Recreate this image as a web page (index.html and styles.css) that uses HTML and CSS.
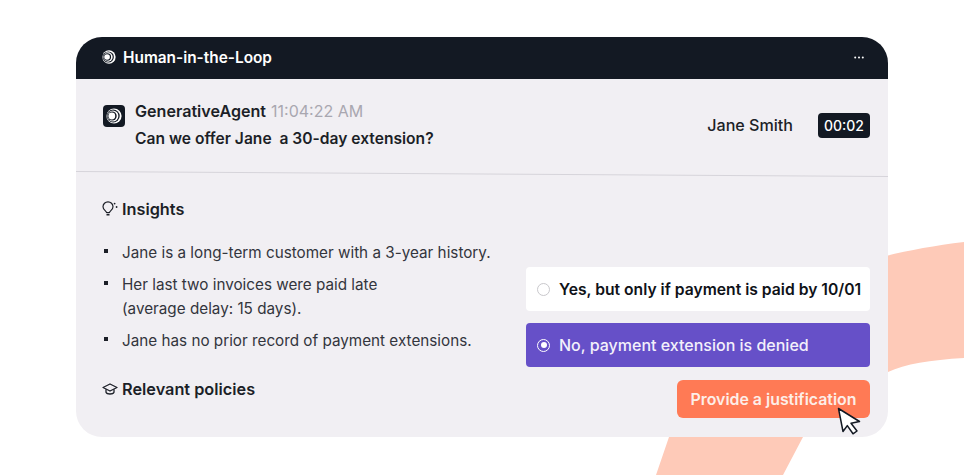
FILE: index.html
```html
<!DOCTYPE html>
<html lang="en">
<head>
<meta charset="utf-8">
<title>Human-in-the-Loop</title>
<link rel="stylesheet" href="styles.css">
</head>
<body>
<main class="stage">
  <svg class="swoosh" width="964" height="475" viewBox="0 0 964 475" aria-hidden="true">
    <path d="M656 475 L669 437 C720 320 800 262 964 242 L964 358 C930 360 905 364 888 372 C850 388 822 408 803 437 L783 475 Z" fill="#fecab8"/>
  </svg>
  <section class="card">
    <header class="titlebar">
      <div class="titlebar-left">
        <svg class="logo-small" width="14" height="14" viewBox="0 0 16 16" aria-hidden="true">
          <circle cx="8" cy="8" r="7.6" fill="#fff"/><circle cx="7.2" cy="8" r="6.4" fill="#131923"/>
          <circle cx="6.9" cy="8" r="5.3" fill="#fff"/><circle cx="6.2" cy="8" r="4.2" fill="#131923"/>
          <circle cx="5.8" cy="8" r="3.2" fill="#fff"/>
        </svg>
        <h1 class="title">Human-in-the-Loop</h1>
      </div>
      <svg class="dots" width="10" height="3" viewBox="0 0 10 3" aria-hidden="true">
        <circle cx="1.2" cy="1.5" r="1" fill="#fff"/><circle cx="5" cy="1.5" r="1" fill="#fff"/><circle cx="8.8" cy="1.5" r="1" fill="#fff"/>
      </svg>
    </header>
    <div class="message">
      <div class="agent-logo">
        <svg width="16" height="16" viewBox="0 0 16 16" aria-hidden="true">
          <circle cx="8" cy="8" r="7.6" fill="#fff"/><circle cx="7.2" cy="8" r="6.5" fill="#131923"/>
          <circle cx="6.9" cy="8" r="5.5" fill="#fff"/><circle cx="6.2" cy="8" r="4.5" fill="#131923"/>
          <circle cx="5.8" cy="8" r="3.4" fill="#fff"/>
        </svg>
      </div>
      <div class="message-text">
        <div class="meta"><span class="agent">GenerativeAgent</span><span class="time">11:04:22 AM</span></div>
        <p class="question">Can we offer Jane&nbsp; a 30-day extension?</p>
      </div>
      <span class="customer">Jane Smith</span>
      <span class="timer">00:02</span>
    </div>
    <svg class="divider" width="812" height="6" viewBox="0 0 812 6" aria-hidden="true">
      <path d="M0 .5 L812 5.5" stroke="#d6d4da" stroke-width="1" fill="none"/>
    </svg>
    <div class="body">
      <div class="details">
        <h2 class="heading">
          <svg width="16" height="16" viewBox="0 0 16 16" aria-hidden="true">
            <path d="M4.5 11.5 C4.3 9.8 1 9 1 5.8 A5 5 0 0 1 11 5.8 C11 9 7.7 9.8 7.5 11.5 Z" fill="none" stroke="#1c1f27" stroke-width="1.2" stroke-linejoin="round"/>
            <path d="M4.5 13.6 H7.5" stroke="#1c1f27" stroke-width="1.6"/>
            <circle cx="12.6" cy="2.6" r=".9" fill="#1c1f27"/><circle cx="14.6" cy="6" r=".9" fill="#1c1f27"/>
          </svg>
          Insights
        </h2>
        <ul class="insights">
          <li>Jane is a long-term customer with a 3-year history.</li>
          <li>Her last two invoices were paid late<br>(average delay: 15 days).</li>
          <li>Jane has no prior record of payment extensions.</li>
        </ul>
        <h2 class="heading policies">
          <svg width="16" height="16" viewBox="0 0 16 16" aria-hidden="true">
            <path d="M8 3 L15 6.5 L8 10 L1 6.5 Z" fill="none" stroke="#1c1f27" stroke-width="1.3" stroke-linejoin="round"/>
            <path d="M4 8.2 V11.2 C5 13.6 11 13.6 12 11.2 V8.2" fill="none" stroke="#1c1f27" stroke-width="1.3"/>
          </svg>
          Relevant policies
        </h2>
      </div>
      <div class="actions">
        <div class="option"><span class="radio"></span>Yes, but only if payment is paid by 10/01</div>
        <div class="option option-selected"><span class="radio radio-on"></span>No, payment extension is denied</div>
        <div class="cta-row">
          <button class="cta" type="button">Provide a justification</button>
          <svg class="cursor" width="26" height="28" viewBox="0 0 25 28" aria-hidden="true">
            <path d="M2 1.5 L23 14.5 L14.5 16.2 L20.5 24 L16.5 26.8 L10.8 18.6 L6.5 24.5 Z" fill="#fff" stroke="#131923" stroke-width="1.5" stroke-linejoin="round"/>
          </svg>
        </div>
      </div>
    </div>
  </section>
</main>
</body>
</html>
```

FILE: styles.css
```css
* { box-sizing: border-box; }
html, body { margin: 0; padding: 0; }
body {
  width: 964px;
  height: 475px;
  overflow: hidden;
  background: #fff;
  font-family: Inter, "Liberation Sans", sans-serif;
  color: #1c1f27;
}
.stage {
  position: relative;
  width: 964px;
  height: 475px;
  padding: 37px 76px 0;
}
.swoosh { position: absolute; left: 0; top: 0; }
.card {
  position: relative;
  width: 812px;
  height: 400px;
  background: #f1eff3;
  border-radius: 26px;
  overflow: hidden;
  display: flex;
  flex-direction: column;
}
.titlebar {
  height: 42px;
  flex: none;
  background: #131923;
  display: flex;
  align-items: center;
  justify-content: space-between;
  padding: 0 24px 2px 26px;
  margin-bottom: 1px;
}
.titlebar-left { display: flex; align-items: center; gap: 7px; }
.logo-small { display: block; }
.title { margin: 0; font-size: 15.4px; font-weight: 600; color: #fff; }
.dots { display: block; }
.message {
  height: 91px;
  flex: none;
  display: flex;
  align-items: flex-start;
  padding: 20px 18px 0 27px;
}
.agent-logo {
  width: 22px;
  height: 22px;
  margin-top: 5px;
  border-radius: 4px;
  background: #131923;
  display: flex;
  align-items: center;
  justify-content: center;
  flex: none;
}
.agent-logo svg { display: block; }
.message-text { margin-left: 10px; flex: 1; }
.meta { display: flex; align-items: baseline; gap: 5px; height: 22px; line-height: 22px; }
.agent { font-size: 16.1px; font-weight: 600; }
.time { font-size: 16px; color: #a9a7b0; }
.question { margin: 7px 0 0; font-size: 15.6px; font-weight: 600; line-height: 20px; }
.customer { font-size: 16.1px; font-weight: 500; margin: 15px 25px 0 0; line-height: 20px; }
.timer {
  margin-top: 13px;
  width: 52px;
  height: 25px;
  border-radius: 4px;
  background: #131923;
  color: #fff;
  font-size: 14px;
  font-weight: 500;
  line-height: 25px;
  text-align: center;
}
.divider { display: block; flex: none; }
.body {
  flex: 1;
  display: flex;
  justify-content: space-between;
  padding: 0 18px 0 26px;
}
.details { width: 410px; }
.heading {
  margin: 0;
  display: flex;
  align-items: center;
  gap: 4px;
  font-size: 16.3px;
  font-weight: 600;
  line-height: 20px;
}
.heading svg { display: block; flex: none; }
.details > .heading:first-child { margin-top: 22px; }
.insights {
  list-style: none;
  margin: 22px 0 0;
  padding: 0 0 0 20px;
  font-size: 15.25px;
  line-height: 24px;
  color: #33353d;
}
.insights li { position: relative; margin-bottom: 8px; }
.insights li::before {
  content: "";
  position: absolute;
  left: -18px;
  top: 8px;
  width: 4px;
  height: 4px;
  background: #1c1f27;
}
.policies { margin-top: 26px; }
.actions {
  width: 344px;
  padding-top: 90px;
  display: flex;
  flex-direction: column;
}
.option {
  height: 44px;
  border-radius: 4px;
  background: #fff;
  display: flex;
  align-items: center;
  padding-left: 11px;
  gap: 10px;
  font-size: 15.7px;
  font-weight: 600;
  color: #0f1218;
  white-space: nowrap;
  margin-bottom: 12px;
}
.option-selected { background: #6650c8; color: #f3f0fb; font-size: 16px; font-weight: 500; margin-bottom: 13px; }
.radio {
  width: 13px;
  height: 13px;
  border-radius: 50%;
  border: 1px solid #c9c8cc;
  flex: none;
  margin-right: -1px;
}
.radio-on {
  border: 1.5px solid #fff;
  display: flex;
  align-items: center;
  justify-content: center;
}
.radio-on::after {
  content: "";
  width: 6px;
  height: 6px;
  border-radius: 50%;
  background: #fff;
}
.cta-row { position: relative; display: flex; justify-content: flex-end; }
.cta {
  width: 193px;
  height: 38px;
  border: 0;
  border-radius: 6px;
  background: #ff7a55;
  color: #fdeee8;
  font-family: inherit;
  font-size: 15.9px;
  font-weight: 600;
  padding: 0;
}
.cursor { position: absolute; right: 8px; top: 27px; }
```
